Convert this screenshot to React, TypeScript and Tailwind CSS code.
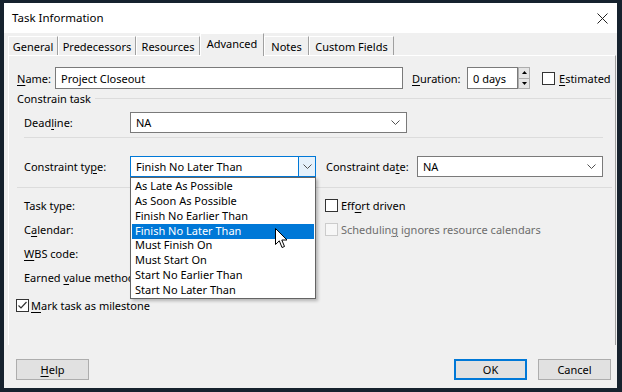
import React from "react";

const Chevron = () => (
  <svg width="9" height="5" viewBox="0 0 9 5">
    <path d="M0.5 0.5 L4.5 4.5 L8.5 0.5" fill="none" stroke="#505050" strokeWidth="1" />
  </svg>
);

const U = ({ children }: { children: React.ReactNode }) => <span className="underline underline-offset-2">{children}</span>;

const Box = ({ checked, disabled }: { checked?: boolean; disabled?: boolean }) => (
  <div
    className={
      "w-[13px] h-[13px] shrink-0 border flex items-center justify-center " +
      (disabled ? "border-[#cccccc] bg-[#f7f7f7]" : "border-[#333333] bg-white")
    }
  >
    {checked && (
      <svg width="11" height="11" viewBox="0 0 11 11">
        <path d="M1.5 5.5 L4 8 L9.5 2" fill="none" stroke="#333" strokeWidth="1.2" />
      </svg>
    )}
  </div>
);

const Tab = ({ w, label, active }: { w: string; label: React.ReactNode; active?: boolean }) => (
  <div
    className={
      w +
      " flex items-center justify-center border-t border-l border-r border-t-white border-l-white border-r-[#a0a0a0] " +
      (active ? "h-[23px] -mb-px z-10 bg-[#f0f0f0] pb-[3px]" : "h-[19px] bg-[#f0f0f0]")
    }
  >
    {label}
  </div>
);

const items = [
  "As Late As Possible",
  "As Soon As Possible",
  "Finish No Earlier Than",
  "Finish No Later Than",
  "Must Finish On",
  "Must Start On",
  "Start No Earlier Than",
  "Start No Later Than",
];

export default function App() {
  return (
    <div className="w-[622px] h-[392px] bg-[#16222e] pt-[3px] pl-[4px] pr-[5px] pb-[4px] font-['Noto_Sans',sans-serif] text-[11px] text-black leading-none">
      <div className="w-full h-full bg-[#f0f0f0] flex flex-col">
        {/* Title bar */}
        <div className="h-[30px] bg-white flex items-center pl-[8px] pr-[9px]">
          <span className="text-[11.5px]">Task Information</span>
          <div className="flex-1" />
          <svg width="11" height="11" viewBox="0 0 11 11">
            <path d="M0.5 0.5 L10.5 10.5 M10.5 0.5 L0.5 10.5" stroke="#222" strokeWidth="1" />
          </svg>
        </div>
        {/* Tabs */}
        <div className="h-[22px] flex items-end pl-[4px]">
          <Tab w="w-[50px]" label="General" />
          <Tab w="w-[78px]" label="Predecessors" />
          <Tab w="w-[64px]" label="Resources" />
          <Tab w="w-[64px]" label="Advanced" active />
          <Tab w="w-[45px]" label="Notes" />
          <Tab w="w-[85px]" label="Custom Fields" />
        </div>
        {/* Panel */}
        <div className="relative ml-[4px] w-[608px] h-[290px] border-t border-l border-r border-t-white border-l-white border-r-[#a0a0a0] flex flex-col pl-[7px] pt-[11px]">
          {/* Name row */}
          <div className="h-[22px] flex items-center">
            <span className="w-[39px] pl-[1px]"><U>N</U>ame:</span>
            <div className="w-[348px] h-[22px] bg-white border border-[#7a7a7a] flex items-center pl-[5px]">Project Closeout</div>
            <span className="ml-[9px] w-[55px]"><U>D</U>uration:</span>
            <div className="w-[51px] h-[22px] bg-white border border-[#7a7a7a] flex items-center pl-[5px]">0 days</div>
            <div className="w-[12px] h-[22px] flex flex-col">
              <div className="flex-1 bg-[#e5e5e5] border border-[#adadad] flex items-center justify-center">
                <svg width="5" height="3" viewBox="0 0 5 3"><path d="M0 3 L2.5 0 L5 3 Z" fill="#000" /></svg>
              </div>
              <div className="flex-1 bg-[#e5e5e5] border border-t-0 border-[#adadad] flex items-center justify-center">
                <svg width="5" height="3" viewBox="0 0 5 3"><path d="M0 0 L2.5 3 L5 0 Z" fill="#000" /></svg>
              </div>
            </div>
            <div className="ml-[12px]"><Box /></div>
            <span className="ml-[4px]"><U>E</U>stimated</span>
          </div>
          {/* Group header */}
          <div className="mt-[2px] h-[14px] flex items-center">
            <span className="pl-[1px]">Constrain task</span>
            <div className="flex-1 h-px bg-[#dcdcdc] ml-[4px] mr-[4px]" />
          </div>
          {/* Deadline */}
          <div className="mt-[7px] h-[21px] flex items-center pl-[8px]">
            <span className="w-[106px]">Dead<U>l</U>ine:</span>
            <div className="w-[277px] h-[21px] bg-white border border-[#7a7a7a] flex items-center pl-[5px] pr-[6px]">
              <span className="flex-1">NA</span>
              <Chevron />
            </div>
          </div>
          <div className="mt-[4px] ml-[8px] w-[579px] h-px bg-[#dcdcdc]" />
          {/* Constraint type */}
          <div className="mt-[18px] h-[21px] flex items-center pl-[8px]">
            <span className="w-[106px]">Constraint ty<U>p</U>e:</span>
            <div className="w-[186px] h-[21px] bg-white border border-[#0078d7] flex items-center">
              <span className="flex-1 pl-[5px]">Finish No Later Than</span>
              <div className="w-[17px] h-full bg-[#e5f1fb] border-l border-[#0078d7] flex items-center justify-center">
                <Chevron />
              </div>
            </div>
            <span className="ml-[10px] w-[91px]">Constraint da<U>t</U>e:</span>
            <div className="w-[186px] h-[21px] bg-white border border-[#7a7a7a] flex items-center pl-[5px] pr-[6px]">
              <span className="flex-1">NA</span>
              <Chevron />
            </div>
          </div>
          <div className="mt-[10px] ml-[1px] w-[595px] h-px bg-[#dcdcdc]" />
          {/* Lower rows */}
          <div className="mt-[6px] flex flex-col pl-[8px]">
            <div className="h-[24px] flex items-center pb-px">
              <span className="w-[301px]">Task type:</span>
              <Box />
              <span className="ml-[3px]">Eff<U>o</U>rt driven</span>
            </div>
            <div className="h-[24px] flex items-center pb-px">
              <span className="w-[301px]">C<U>a</U>lendar:</span>
              <Box disabled />
              <span className="ml-[3px] text-[#6d6d6d]">Schedulin<U>g</U> ignores resource calendars</span>
            </div>
            <div className="h-[24px] flex items-center pb-px">
              <span className="w-[301px]"><U>W</U>BS code:</span>
            </div>
            <div className="h-[24px] flex items-center pb-px">
              <span className="w-[301px] whitespace-nowrap">Earned <U>v</U>alue method:</span>
            </div>
          </div>
          <div className="mt-[8px] h-[14px] flex items-center">
            <Box checked />
            <span className="ml-[2px]"><U>M</U>ark task as milestone</span>
          </div>

          {/* Dropdown list overlay */}
          <div className="absolute left-[121px] top-[121px] w-[186px] h-[122px] bg-white border border-[#646464] shadow-[2px_2px_3px_rgba(0,0,0,0.25)] flex flex-col pt-px px-px z-20">
            {items.map((it) => (
              <div
                key={it}
                className={
                  "h-[15px] flex items-center pl-[3px] pb-[2px] " +
                  (it === "Finish No Later Than" ? "bg-[#0078d7] text-white" : "")
                }
              >
                {it}
              </div>
            ))}
          </div>
          {/* Cursor */}
          <svg className="absolute left-[266px] top-[172px] z-30" width="13" height="21" viewBox="0 0 13 21">
            <path d="M0.5 0.5 L0.5 16.5 L4.3 12.8 L7 19.5 L9.5 18.5 L6.8 12 L12 12 Z" fill="#fff" stroke="#000" strokeWidth="1" strokeLinejoin="round" />
          </svg>
        </div>
        {/* Buttons */}
        <div className="mt-[14px] flex items-center pl-[12px] pr-[6px]">
          <div className="w-[73px] h-[21px] bg-[#e1e1e1] border border-[#adadad] flex items-center justify-center"><U>H</U>elp</div>
          <div className="flex-1" />
          <div className="w-[73px] h-[21px] bg-[#e1e1e1] border-2 border-[#0078d7] flex items-center justify-center">OK</div>
          <div className="ml-[11px] w-[73px] h-[21px] bg-[#e1e1e1] border border-[#adadad] flex items-center justify-center">Cancel</div>
        </div>
      </div>
    </div>
  );
}
